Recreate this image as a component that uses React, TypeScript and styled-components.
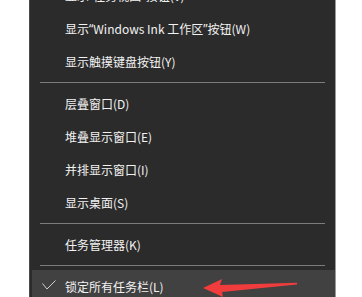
import React from 'react'
import styled, { createGlobalStyle } from 'styled-components'

const GlobalStyle = createGlobalStyle`
  html, body {
    margin: 0;
    padding: 0;
    background: #ffffff;
    overflow: hidden;
  }
`

const Page = styled.div`
  width: 362px;
  height: 297px;
  overflow: hidden;
  background: #ffffff;
`

const Menu = styled.div`
  margin-left: 29px;
  margin-top: -21px;
  width: 303px;
  display: flex;
  flex-direction: column;
  background: #2b2b2b;
  border-left: 1px solid #4a4a4a;
  border-right: 1px solid #9a9a9a;
  padding-left: 2px;
  font-family: 'Noto Sans CJK SC', 'Noto Sans', sans-serif;
  font-size: 12px;
  color: #f2f2f2;
`

const Item = styled.div<{ $active?: boolean }>`
  position: relative;
  height: 33px;
  display: flex;
  align-items: center;
  padding-left: 33px;
  background: ${({ $active }) => ($active ? '#414141' : 'transparent')};
  white-space: pre;
`

// curly quotes are narrow in the original menu font
const Quote = styled.span`
  font-family: 'Noto Sans', 'Liberation Sans', sans-serif;
`

const Separator = styled.div`
  height: 9px;
  display: flex;
  align-items: center;
  padding: 0 10px 0 8px;

  &::after {
    content: '';
    flex: 1;
    height: 1px;
    background: #7d7d7d;
  }
`

const Check = styled.svg`
  position: absolute;
  left: 10px;
  top: 10px;
`

const Arrow = styled.svg`
  position: absolute;
  left: 169px;
  top: 0;
`

type Entry = { label?: string; sep?: boolean; checked?: boolean; active?: boolean }

const entries: Entry[] = [
  { label: '显示“任务视图”按钮(V)' },
  { label: '显示“Windows Ink 工作区”按钮(W)' },
  { label: '显示触摸键盘按钮(Y)' },
  { sep: true },
  { label: '层叠窗口(D)' },
  { label: '堆叠显示窗口(E)' },
  { label: '并排显示窗口(I)' },
  { label: '显示桌面(S)' },
  { sep: true },
  { label: '任务管理器(K)' },
  { sep: true },
  { label: '锁定所有任务栏(L)', checked: true, active: true },
]

const renderLabel = (label: string) =>
  label.split(/([“”])/).map((part, i) =>
    part === '“' || part === '”' ? <Quote key={i}>{part}</Quote> : part
  )

export default function App() {
  return (
    <Page>
      <GlobalStyle />
      <Menu>
        {entries.map((e, i) =>
          e.sep ? (
            <Separator key={i} />
          ) : (
            <Item key={i} $active={e.active}>
              {e.checked && (
                <Check width="14" height="11" viewBox="0 0 14 11">
                  <polyline points="0.5,3.5 5,9 13.5,0.5" fill="none" stroke="#d0d0d0" strokeWidth="1" />
                </Check>
              )}
              {renderLabel(e.label || '')}
              {e.active && (
                <Arrow width="100" height="30" viewBox="0 0 100 30">
                  <polygon
                    points="2,18 21,9 19,15 96,12.8 96,14.6 21,22 22,27"
                    fill="#f03c3c"
                  />
                </Arrow>
              )}
            </Item>
          )
        )}
      </Menu>
    </Page>
  )
}
